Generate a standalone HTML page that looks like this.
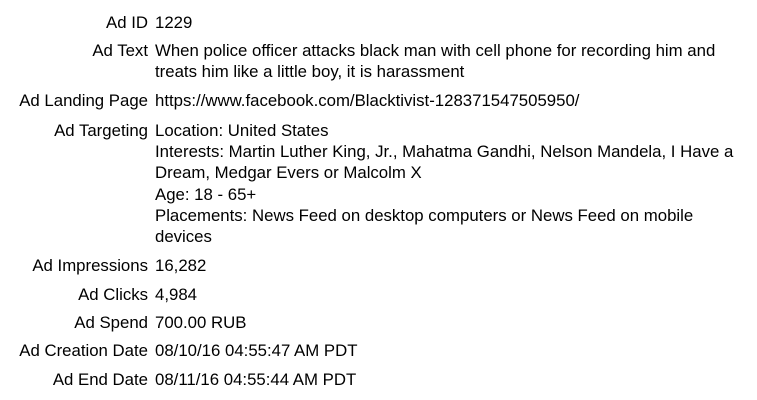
<!DOCTYPE html>
<html><head><meta charset="utf-8"><style>
body{margin:0;width:757px;height:400px;background:#fff;font-family:"Liberation Sans",Arial,sans-serif;font-size:16.8px;color:#000;position:relative;overflow:hidden}
.l,.v{position:absolute;line-height:21.2px;white-space:nowrap}
.l{right:609px;text-align:right}
.v{left:155px}
</style></head><body>
<div class="l" style="top:12px">Ad ID</div><div class="v" style="top:12px">1229</div>
<div class="l" style="top:40px">Ad Text</div><div class="v" style="top:40px">When police officer attacks black man with cell phone for recording him and<br>treats him like a little boy, it is harassment</div>
<div class="l" style="top:90px">Ad Landing Page</div><div class="v" style="top:90px">https://www.facebook.com/Blacktivist-128371547505950/</div>
<div class="l" style="top:120px">Ad Targeting</div><div class="v" style="top:120px">Location: United States<br>Interests: Martin Luther King, Jr., Mahatma Gandhi, Nelson Mandela, I Have a<br>Dream, Medgar Evers or Malcolm X<br>Age: 18 - 65+<br>Placements: News Feed on desktop computers or News Feed on mobile<br>devices</div>
<div class="l" style="top:255px">Ad Impressions</div><div class="v" style="top:255px">16,282</div>
<div class="l" style="top:284px">Ad Clicks</div><div class="v" style="top:284px">4,984</div>
<div class="l" style="top:312px">Ad Spend</div><div class="v" style="top:312px">700.00 RUB</div>
<div class="l" style="top:340px">Ad Creation Date</div><div class="v" style="top:340px">08/10/16 04:55:47 AM PDT</div>
<div class="l" style="top:369px">Ad End Date</div><div class="v" style="top:369px">08/11/16 04:55:44 AM PDT</div>
</body></html>
